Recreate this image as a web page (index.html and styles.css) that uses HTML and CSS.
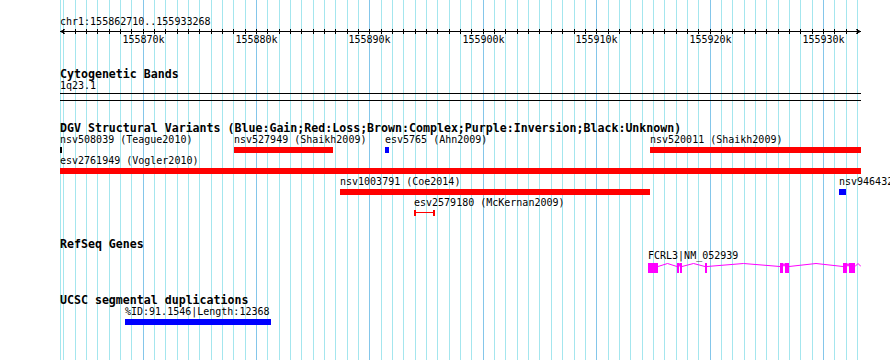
FILE: index.html
```html
<!DOCTYPE html>
<html lang="en">
<head>
  <meta charset="UTF-8" />
  <meta name="viewport" content="width=device-width, initial-scale=1.0"/>
  <title>chr1:155862710..155933268</title>
  <link rel="stylesheet" href="styles.css">
</head>
<body>
  <div class="view" id="view">
    <div class="grid" id="grid"></div>

    <section class="ruler">
      <div class="ruler-label">chr1:155862710..155933268</div>
      <div class="scale" id="scale">
        <div class="scale-line"></div>
        <svg class="arrow arrow-left" width="6" height="7" viewBox="0 0 6 7">
          <polyline points="5,1.5 0.5,3.5 5,5.5" fill="none" stroke="#000" stroke-width="1"/>
        </svg>
        <svg class="arrow arrow-right" width="6" height="7" viewBox="0 0 6 7">
          <polyline points="1,1.5 5.5,3.5 1,5.5" fill="none" stroke="#000" stroke-width="1"/>
        </svg>
      </div>
      <div class="scale-labels" id="scale-labels"></div>
    </section>

    <section class="track track-bands">
      <h2>Cytogenetic Bands</h2>
      <div class="band-label">1q23.1</div>
      <div class="band"></div>
    </section>

    <section class="track track-dgv">
      <h2>DGV Structural Variants (Blue:Gain;Red:Loss;Brown:Complex;Purple:Inversion;Black:Unknown)</h2>
      <div id="dgv-rows"></div>
    </section>

    <section class="track track-genes">
      <h2>RefSeq Genes</h2>
      <div class="row row-gene" id="gene-row"></div>
    </section>

    <section class="track track-segdup">
      <h2>UCSC segmental duplications</h2>
      <div id="segdup-rows"></div>
    </section>
  </div>

  <script>
    const VIEW_START = 155862710;
    const VIEW_END = 155933268;
    const VIEW_WIDTH = 800;

    const dgvRows = [
      [
        { name: "nsv508039 (Teague2010)", start: 155850000, end: 155862890, type: "unknown" },
        { name: "nsv527949 (Shaikh2009)", start: 155878057, end: 155886788, type: "loss" },
        { name: "esv5765 (Ahn2009)", start: 155891374, end: 155891727, type: "gain" },
        { name: "nsv520011 (Shaikh2009)", start: 155914746, end: 155941000, type: "loss" }
      ],
      [
        { name: "esv2761949 (Vogler2010)", start: 155700000, end: 155990000, type: "loss" }
      ],
      [
        { name: "nsv1003791 (Coe2014)", start: 155887405, end: 155914746, type: "loss" },
        { name: "nsv946432 (Coe2014)", start: 155931416, end: 155932033, type: "gain" }
      ],
      [
        { name: "esv2579180 (McKernan2009)", start: 155893931, end: 155895784, type: "loss", shape: "span" }
      ]
    ];

    const segdupRows = [
      [
        { name: "%ID:91.1546|Length:12368", start: 155868443, end: 155881320, type: "segdup" }
      ]
    ];

    const gene = {
      name: "FCRL3|NM_052939",
      exons: [
        [155914570, 155915452],
        [155917128, 155917304],
        [155917392, 155917569],
        [155919597, 155919774],
        [155926212, 155926477],
        [155926653, 155927006],
        [155931768, 155932121],
        [155932297, 155932829],
        [155933360, 155933900]
      ]
    };

    function toX(bp) {
      const x = Math.round((bp - VIEW_START) * VIEW_WIDTH / (VIEW_END - VIEW_START));
      return Math.max(0, Math.min(VIEW_WIDTH + 1, x));
    }

    function renderGrid() {
      const grid = document.getElementById("grid");
      const scale = document.getElementById("scale");
      const labels = document.getElementById("scale-labels");

      const edge = document.createElement("div");
      edge.className = "grid-line";
      edge.style.left = "0px";
      grid.appendChild(edge);

      for (let kb = Math.ceil(VIEW_START / 1000); kb * 1000 <= VIEW_END; kb++) {
        const x = toX(kb * 1000);
        const major = kb % 10 === 0;

        const line = document.createElement("div");
        line.className = major ? "grid-line major" : "grid-line";
        line.style.left = x + "px";
        grid.appendChild(line);

        const tick = document.createElement("div");
        tick.className = "tick";
        tick.style.left = x + "px";
        scale.appendChild(tick);

        if (major) {
          const label = document.createElement("div");
          label.className = "scale-label";
          label.style.left = (x + 0.5) + "px";
          label.textContent = kb + "k";
          labels.appendChild(label);
        }
      }
    }

    function renderRows(containerId, rows) {
      const container = document.getElementById(containerId);
      rows.forEach(features => {
        const row = document.createElement("div");
        row.className = "row";
        features.forEach(f => {
          const x1 = toX(f.start);
          const x2 = toX(f.end);
          const div = document.createElement("div");
          div.className = "feature";
          div.style.left = x1 + "px";
          div.innerHTML = `
            <div class="feature-label">${f.name}</div>
            <div class="glyph ${f.type} ${f.shape || ""}" style="width:${Math.max(1, x2 - x1)}px"></div>
          `;
          row.appendChild(div);
        });
        container.appendChild(row);
      });
    }

    function renderGene() {
      const row = document.getElementById("gene-row");
      const exons = gene.exons.map(([s, e]) => [toX(s), toX(e)]);
      const x0 = exons[0][0];
      const width = VIEW_WIDTH + 1 - x0;

      let shapes = "";
      exons.forEach(([a, b], i) => {
        if (b > a) {
          shapes += `<rect x="${a - x0}" y="0" width="${b - a}" height="10" fill="#f0f"/>`;
        }
        if (i < exons.length - 1) {
          const from = b - x0;
          const to = exons[i + 1][0] - x0;
          const mid = (from + to) / 2;
          shapes += `<polyline points="${from},3.5 ${mid},0.5 ${to},3.5" fill="none" stroke="#f0f" stroke-width="1"/>`;
        }
      });

      const div = document.createElement("div");
      div.className = "feature";
      div.style.left = x0 + "px";
      div.innerHTML = `
        <div class="feature-label">${gene.name}</div>
        <svg class="gene-model" width="${width}" height="10" viewBox="0 0 ${width} 10">${shapes}</svg>
      `;
      row.appendChild(div);
    }

    renderGrid();
    renderRows("dgv-rows", dgvRows);
    renderGene();
    renderRows("segdup-rows", segdupRows);
  </script>
</body>
</html>
```

FILE: styles.css
```css
html, body {
  margin: 0;
  padding: 0;
}

body {
  width: 890px;
  height: 360px;
  overflow: hidden;
  background: #fff;
  color: #000;
  font-family: "DejaVu Sans Mono", monospace;
  font-size: 10px;
  line-height: 12px;
}

.view {
  position: relative;
  margin-left: 60px;
  width: 800px;
  height: 360px;
}

.grid {
  position: absolute;
  top: 0;
  left: 0;
  right: 0;
  bottom: 0;
}

.grid-line {
  position: absolute;
  top: 0;
  bottom: 0;
  width: 1px;
  background: #a4e6ee;
}

.grid-line.major {
  background: #84c6ea;
}

.ruler,
.track {
  position: relative;
}

/* ruler */
.ruler {
  padding-top: 16px;
}

.ruler-label {
  height: 12px;
  white-space: nowrap;
}

.scale {
  position: relative;
  height: 6px;
}

.scale-line {
  position: absolute;
  left: 0;
  top: 3px;
  width: 801px;
  height: 1px;
  background: #000;
}

.tick {
  position: absolute;
  top: 1px;
  width: 1px;
  height: 5px;
  background: #000;
}

.arrow {
  position: absolute;
  top: 0;
}

.arrow-left {
  left: 0;
}

.arrow-right {
  left: 795px;
}

.scale-labels {
  position: relative;
  height: 12px;
}

.scale-label {
  position: absolute;
  top: 0;
  transform: translateX(-50%);
  white-space: nowrap;
}

/* tracks */
.track h2 {
  margin: 0;
  font-size: 11.6px;
  line-height: 12px;
  font-weight: bold;
  white-space: nowrap;
}

.track-bands {
  margin-top: 22px;
}

.band-label {
  height: 12px;
}

.band {
  margin-top: 1px;
  width: 801px;
  height: 8px;
  box-sizing: border-box;
  border-top: 1px solid #000;
  border-bottom: 1px solid #000;
}

.track-dgv {
  margin-top: 21px;
}

.track-genes {
  margin-top: 20px;
}

.track-segdup {
  margin-top: 19px;
}

.row {
  position: relative;
  height: 21px;
}

.row-gene {
  height: 25px;
}

.feature {
  position: absolute;
  top: 0;
}

.feature-label {
  height: 12px;
  white-space: nowrap;
}

.glyph {
  margin-top: 1px;
  height: 6px;
}

.glyph.loss {
  background: #f00;
}

.glyph.gain,
.glyph.segdup {
  background: #00f;
}

.glyph.unknown {
  background: #000;
}

.glyph.span {
  position: relative;
  box-sizing: border-box;
  background: none;
  border-left: 2px solid #f00;
  border-right: 2px solid #f00;
}

.glyph.span::before {
  content: "";
  position: absolute;
  left: 0;
  right: 0;
  top: 2px;
  height: 1px;
  background: #f00;
}

.gene-model {
  display: block;
  margin-top: 1px;
}
```
